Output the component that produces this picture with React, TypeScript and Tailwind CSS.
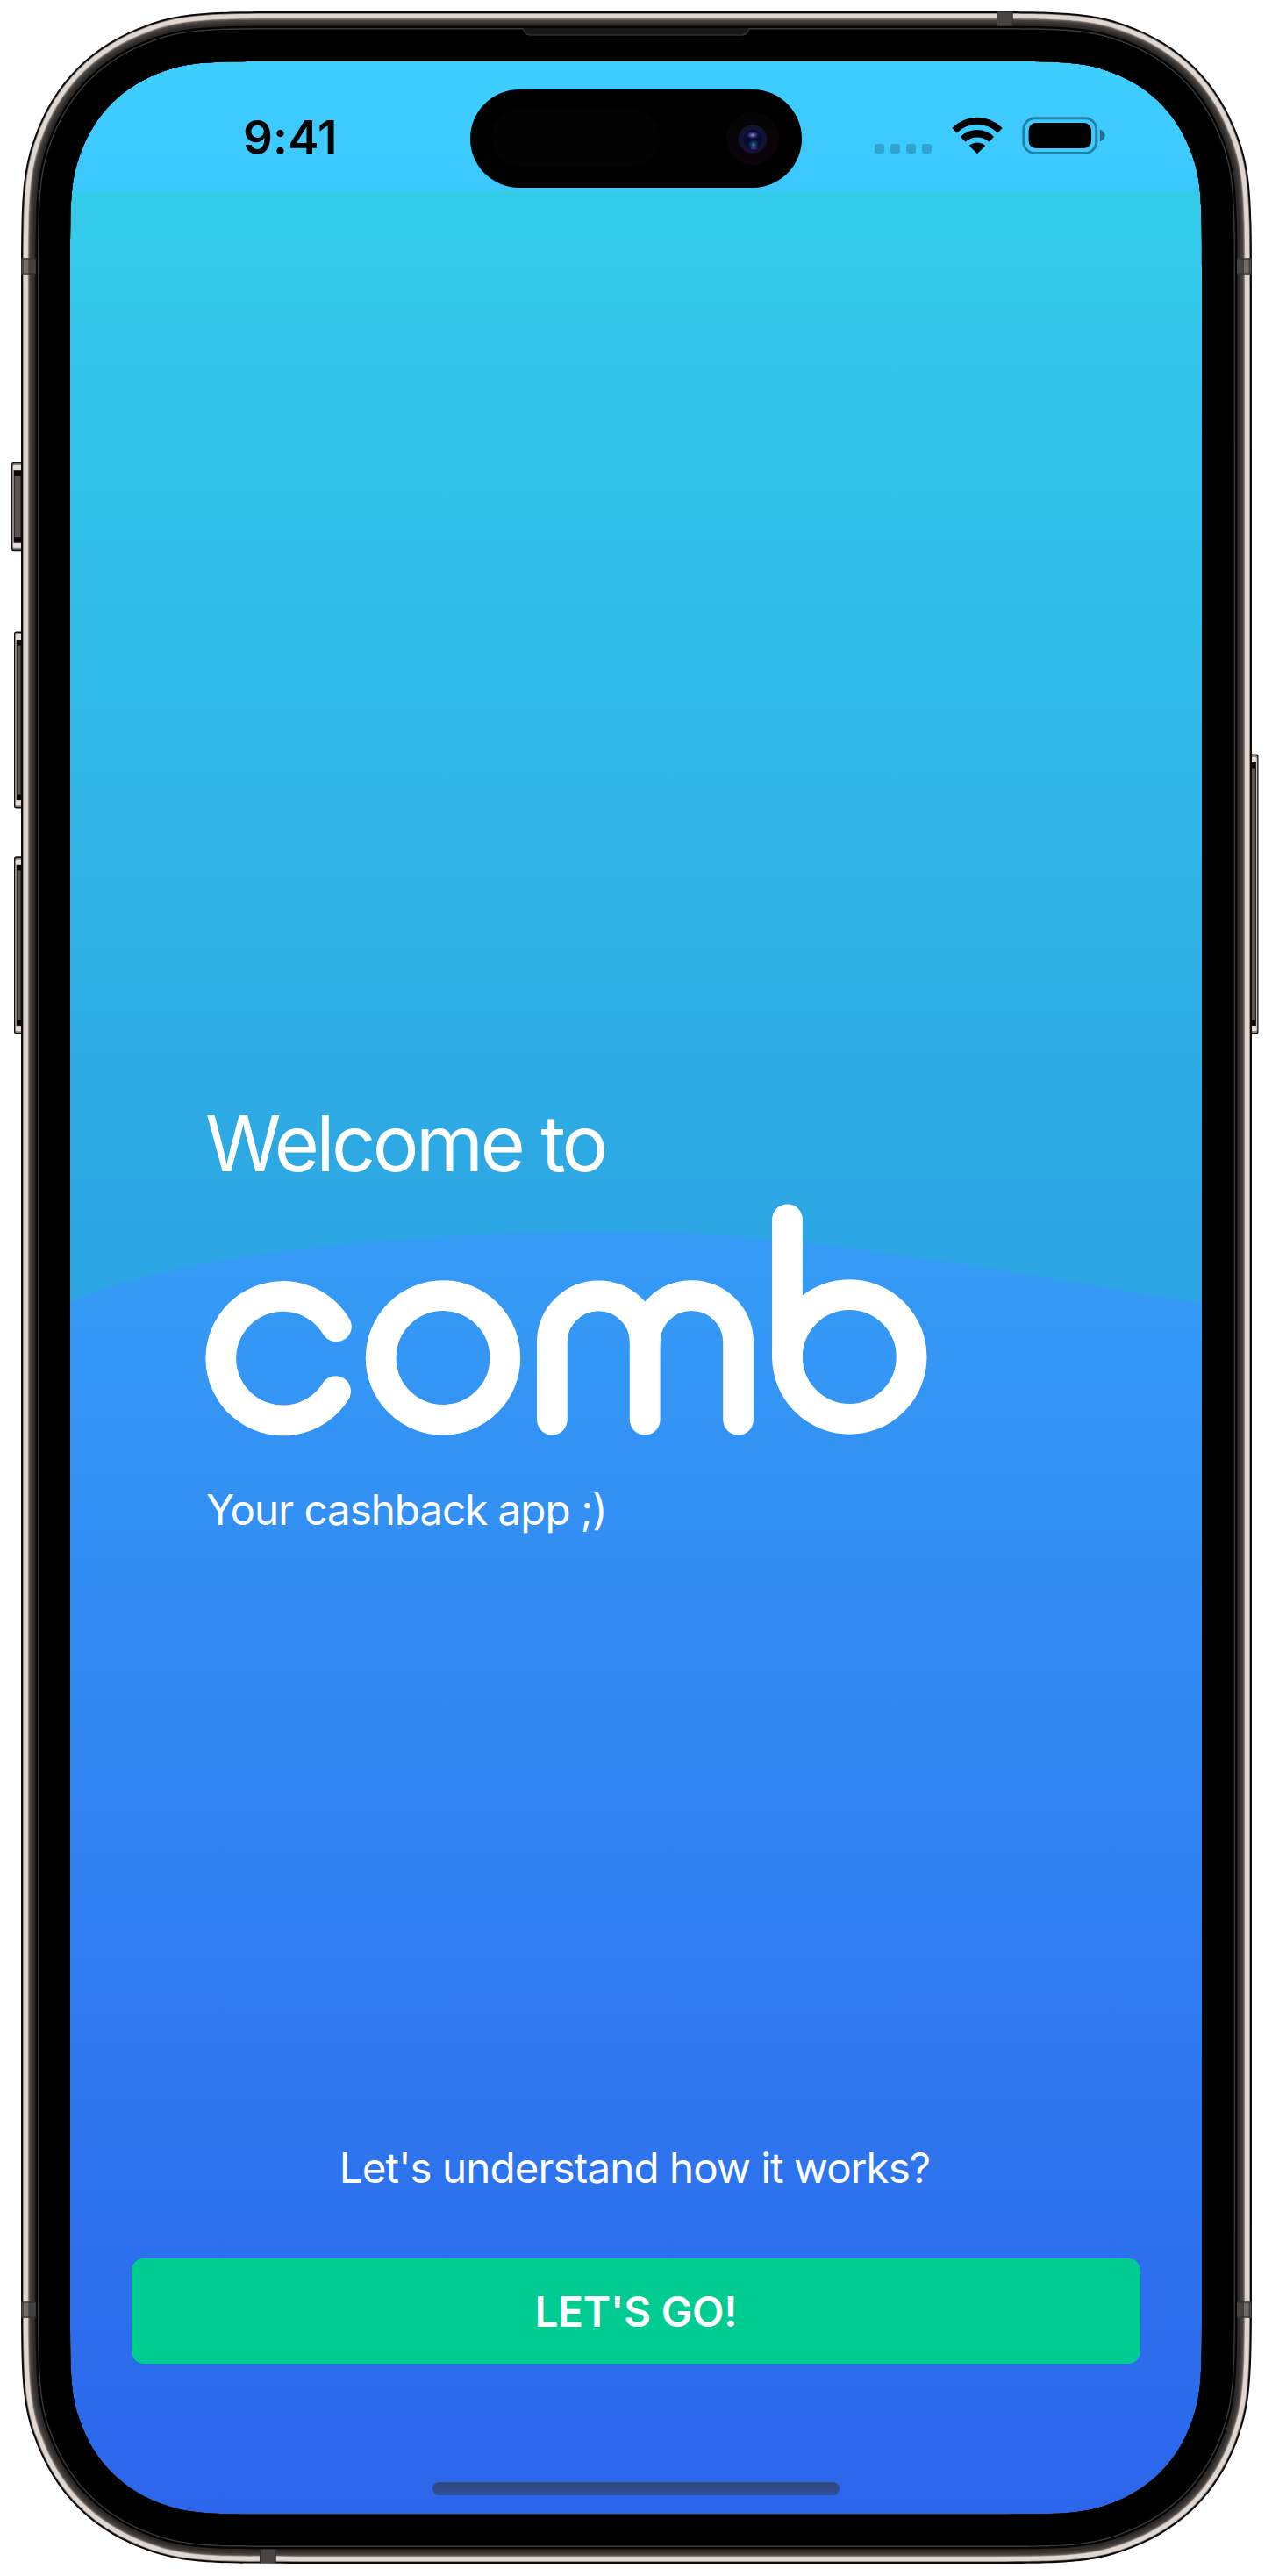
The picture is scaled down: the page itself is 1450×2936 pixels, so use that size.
const FRAME = { x: 24, y: 13, w: 1403, h: 2909, r: 223 };
const SCREEN = { x: 80, y: 70, w: 1290, h: 2795.7, r: 165 };

/** Closed outline of a rectangle with continuous ("squircle") corners. */
function continuousRect(x: number, y: number, w: number, h: number, r: number): string {
  const X = x + w;
  const Y = y + h;
  const a = 1.4375 * r;
  const b = 1.0 * r;
  const c = 0.832 * r;
  const d = 0.65 * r;
  const e = 0.066 * r;
  const f = 0.3625 * r;
  const g = 0.167 * r;
  return [
    `M${x + a},${y} L${X - a},${y}`,
    `C${X - b},${y} ${X - c},${y} ${X - d},${y + e}`,
    `C${X - f},${y + g} ${X - g},${y + f} ${X - e},${y + d}`,
    `C${X},${y + c} ${X},${y + b} ${X},${y + a}`,
    `L${X},${Y - a}`,
    `C${X},${Y - b} ${X},${Y - c} ${X - e},${Y - d}`,
    `C${X - g},${Y - f} ${X - f},${Y - g} ${X - d},${Y - e}`,
    `C${X - c},${Y} ${X - b},${Y} ${X - a},${Y}`,
    `L${x + a},${Y}`,
    `C${x + b},${Y} ${x + c},${Y} ${x + d},${Y - e}`,
    `C${x + f},${Y - g} ${x + g},${Y - f} ${x + e},${Y - d}`,
    `C${x},${Y - c} ${x},${Y - b} ${x},${Y - a}`,
    `L${x},${y + a}`,
    `C${x},${y + b} ${x},${y + c} ${x + e},${y + d}`,
    `C${x + g},${y + f} ${x + f},${y + g} ${x + d},${y + e}`,
    `C${x + c},${y} ${x + b},${y} ${x + a},${y}Z`,
  ].join(" ");
}

const insetFrame = (i: number) =>
  continuousRect(FRAME.x + i, FRAME.y + i, FRAME.w - 2 * i, FRAME.h - 2 * i, FRAME.r - i * 1.03);

const screenOutline = continuousRect(SCREEN.x, SCREEN.y, SCREEN.w, SCREEN.h, SCREEN.r);

// Steel band, from the outer edge towards the glass.
const rim: [number, string][] = [
  [0, "#0d0b0a"],
  [2, "#857a73"],
  [2.8, "#dfd7d1"],
  [7.8, "#a49a93"],
  [8.6, "#665e58"],
  [9.8, "#48423e"],
  [11.5, "#3a3633"],
  [13.5, "#2d2a28"],
  [16.5, "#050505"],
  [19, "#3a3938"],
  [20.4, "#000000"],
];

const topBottomBands = [
  { x: 1136, y: 13.5 },
  { x: 296, y: 2905.5 },
];
const sideBands = [
  { x: 24.3, y: 294.5 },
  { x: 24.3, y: 2623.5 },
  { x: 1410, y: 294.5 },
  { x: 1410, y: 2623.5 },
];

function SideButton({ x, y, w, h, right = false }: { x: number; y: number; w: number; h: number; right?: boolean }) {
  const t = right ? `translate(${x + w},${y}) scale(-1,1)` : `translate(${x},${y})`;
  return (
    <g transform={t}>
      <rect width={w + 4} height={h} rx="2.5" fill="#14110f" />
      <rect x="1.2" y="1.6" width={w} height={h - 3.2} rx="1.5" fill="#8f857e" />
      <rect x="1.8" y="3.4" width={w} height={h - 6.8} rx="1.5" fill="#e4dcd6" />
      <rect x="2.6" y="9.5" width={w} height={h - 19} fill="#0a0808" />
      <rect x="3.6" y="16" width={w - 4.6} height={h - 32} fill="#5c5653" />
    </g>
  );
}

function DeviceFrame() {
  return (
    <svg
      className="pointer-events-none absolute inset-0"
      width="1450"
      height="2936"
      viewBox="0 0 1450 2936"
      aria-hidden="true"
    >
      <defs>
        <clipPath id="around-screen">
          <path d={`M0,0H1450V2936H0Z ${screenOutline}`} clipRule="evenodd" />
        </clipPath>
      </defs>
      <SideButton x={13} y={526.7} w={11.5} h={101.5} />
      <SideButton x={16} y={719.6} w={8.5} h={202} />
      <SideButton x={16} y={976.3} w={8.5} h={202.3} />
      <SideButton x={1426} y={859.5} w={8.5} h={319} right />
      <g clipPath="url(#around-screen)">
        {rim.map(([inset, color]) => (
          <path key={inset} d={insetFrame(inset)} fill={color} />
        ))}
        {topBottomBands.map((b) => (
          <g key={b.x}>
            <rect x={b.x} y={b.y} width="18.5" height="16" fill="#474443" />
            <rect x={b.x} y={b.y} width="1" height="16" fill="#2c2928" />
            <rect x={b.x + 17.5} y={b.y} width="1" height="16" fill="#2c2928" />
          </g>
        ))}
        {sideBands.map((b) => (
          <g key={`${b.x}-${b.y}`}>
            <rect x={b.x} y={b.y} width="16.5" height="18" fill="#444241" />
            <rect x={b.x < 700 ? b.x + 2.5 : b.x + 8} y={b.y} width="5.5" height="18" fill="#706c69" />
            <rect x={b.x} y={b.y} width="16.5" height="1" fill="#2c2928" />
            <rect x={b.x} y={b.y + 17} width="16.5" height="1" fill="#2c2928" />
          </g>
        ))}
        <path d="M596,32 Q599,40.5 605,40.5 H845 Q852,40.5 854,32Z" fill="#181818" />
        <path d="M596,32.5 Q599,40 605,40 H845 Q852,40 854,32.5" fill="none" stroke="#383838" strokeWidth="1.2" />
      </g>
    </svg>
  );
}

function DynamicIsland() {
  return (
    <div className="flex h-[112px] w-[378px] items-center justify-between rounded-full bg-black pr-[26.5px] pl-6">
      <div className="h-[65px] w-[193px] rounded-full bg-[#030303]" />
      <svg width="60" height="60" viewBox="0 0 60 60" aria-hidden="true">
        <defs>
          <linearGradient id="lens-well" x1="0" y1="0" x2="0" y2="1">
            <stop offset="0" stopColor="#040404" />
            <stop offset="1" stopColor="#0d030b" />
          </linearGradient>
          <radialGradient id="lens-top">
            <stop offset="0" stopColor="#8f9bea" />
            <stop offset="1" stopColor="#1b2068" stopOpacity="0" />
          </radialGradient>
          <radialGradient id="lens-bottom">
            <stop offset="0" stopColor="#2a8a8c" />
            <stop offset="1" stopColor="#10285c" stopOpacity="0" />
          </radialGradient>
        </defs>
        <circle cx="30" cy="30" r="30" fill="url(#lens-well)" />
        <circle cx="30" cy="30.5" r="16.3" fill="#12142a" />
        <circle cx="30" cy="30.5" r="13" fill="#10143f" />
        <circle cx="30" cy="30.5" r="10.8" fill="#080a30" />
        <ellipse cx="30" cy="26" rx="8" ry="5" fill="url(#lens-top)" />
        <circle cx="31" cy="37" r="6.5" fill="url(#lens-bottom)" />
        <ellipse cx="31" cy="41" rx="3.2" ry="1.1" fill="#6b1c9c" />
      </svg>
    </div>
  );
}

function StatusBar() {
  return (
    <header className="flex h-[147.5px] shrink-0 items-start bg-linear-to-b from-[#3eceff] to-[#3cc8ff] pt-[31.5px]">
      <div className="flex w-[456px] items-start pt-[24px] pl-[197px]">
        <span className="text-[53px] leading-[62px] font-semibold tracking-[0.2px] text-black">9:41</span>
      </div>
      <DynamicIsland />
      <div className="flex items-start pt-[31.5px] pl-[83px]">
        <div className="flex gap-[7px] pt-[31px]">
          {[0, 1, 2, 3].map((i) => (
            <span key={i} className="size-[11px] rounded-[3px] bg-[#31a3d0]" />
          ))}
        </div>
        <svg className="ml-[22.5px]" width="58" height="43" viewBox="0 0 58 43" aria-hidden="true">
          <path d="M0.3,13 A40,40 0 0 1 57.7,13 L52.2,18.5 A32.5,32.5 0 0 0 5.8,18.5Z" />
          <path d="M10,23 A26.5,26.5 0 0 1 48,23 L42.4,28.8 A19.3,19.3 0 0 0 15.6,28.8Z" />
          <path d="M19.8,33 A13.5,13.5 0 0 1 38.2,33 L29,42.2Z" />
        </svg>
        <svg className="ml-[22px]" width="96" height="44" viewBox="0 0 96 44" aria-hidden="true">
          <rect x="1.8" y="1.7" width="83" height="39.8" rx="13" fill="none" stroke="#2580a5" strokeWidth="3" />
          <rect x="7.6" y="7" width="71.4" height="29" rx="8.5" />
          <path d="M88.8,14.5 C92.3,16 94.5,18.6 94.5,21.6 C94.5,24.7 92.3,27.2 88.8,28.5Z" fill="#226f8f" />
        </svg>
      </div>
    </header>
  );
}

function WaveBackdrop() {
  return (
    <svg className="absolute inset-0" width="1290" height="2796" viewBox="80 70 1290 2796" aria-hidden="true">
      <defs>
        <linearGradient id="sky" gradientUnits="userSpaceOnUse" x1="0" y1="217" x2="0" y2="1484">
          <stop offset="0" stopColor="#33cceb" />
          <stop offset="1" stopColor="#2ca4e3" />
        </linearGradient>
        <linearGradient id="sea" gradientUnits="userSpaceOnUse" x1="0" y1="1404" x2="0" y2="2866">
          <stop offset="0" stopColor="#359cf6" />
          <stop offset="1" stopColor="#2b65eb" />
        </linearGradient>
      </defs>
      <rect x="80" y="217" width="1290" height="2649" fill="url(#sky)" />
      <path
        d="M80,1484 C195,1433 430,1404 705,1404 C905,1404 1085,1440 1370,1485 V2866 H80Z"
        fill="url(#sea)"
      />
    </svg>
  );
}

function CombLogo() {
  return (
    <svg
      className="mt-[19px] block"
      width="824"
      height="265"
      viewBox="234 1371.5 824 265"
      fill="none"
      stroke="#fff"
      strokeWidth="34.8"
      strokeLinecap="round"
      role="img"
      aria-label="comb"
    >
      <path d="M383.4,1511.4 A70.8,70.8 0 1 0 382.6,1585.2" />
      <circle cx="505" cy="1547" r="70.8" />
      <path d="M629.4,1617.6 V1529.3 A52.9,52.9 0 0 1 735.2,1529.3 V1617.6" />
      <path d="M735.2,1529.3 A53.2,53.2 0 0 1 841.6,1529.3 V1617.6" />
      <path d="M897.5,1389.3 V1546" />
      <circle cx="968.3" cy="1546" r="70.8" />
    </svg>
  );
}

export default function App() {
  return (
    <div className="relative h-[2936px] w-[1450px] overflow-hidden bg-white px-20 pt-[70px] font-[Inter,sans-serif]">
      <main className="relative h-[2796px] w-[1290px] overflow-hidden [clip-path:inset(0_round_120px)]">
        <WaveBackdrop />
        <div className="relative flex h-full flex-col">
          <StatusBar />
          <section className="flex flex-col items-start pt-[1035px] pl-[154px] text-white">
            <h1 className="text-[88px] leading-[100px] font-normal tracking-[-3.6px] whitespace-nowrap">
              Welcome to
            </h1>
            <CombLogo />
            <p className="mt-[54.5px] pl-px text-[47.5px] leading-[60px] tracking-[-1px] whitespace-nowrap">
              Your cashback app ;)
            </p>
          </section>
          <section className="mt-auto flex flex-col items-stretch px-[70px] text-center text-white">
            <p className="pr-[3px] text-[47.5px] leading-[60px] tracking-[-0.9px] whitespace-nowrap">
              Let's understand how it works?
            </p>
            <button className="mt-[73px] h-[120px] rounded-[14px] bg-[#00cc92] pt-[2px] text-[47.5px] font-semibold tracking-[-0.2px]">
              LET'S GO!
            </button>
            <div className="mt-[135px] mb-[22px] h-[15px] w-[464px] self-center rounded-full bg-linear-to-b from-[#33487a] to-[#2c509c]" />
          </section>
        </div>
      </main>
      <DeviceFrame />
    </div>
  );
}
